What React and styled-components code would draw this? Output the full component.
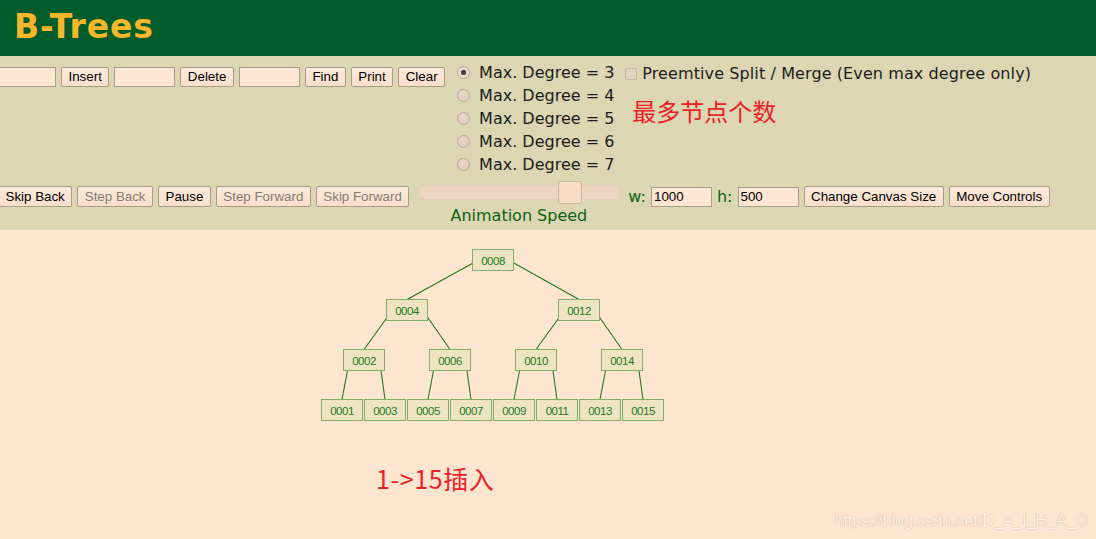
import React from 'react';
import styled, { createGlobalStyle } from 'styled-components';

const GlobalStyle = createGlobalStyle`
  html, body {
    margin: 0;
    padding: 0;
    background: #fee5cf;
    overflow: hidden;
  }
  body {
    font-family: "DejaVu Sans", Verdana, sans-serif;
  }
`;

const Page = styled.div`
  display: flex;
  flex-direction: column;
  width: 1096px;
  height: 539px;
  overflow: hidden;
`;

const Header = styled.header`
  height: 56px;
  box-sizing: border-box;
  padding: 7px 0 0 14px;
  background: #005c2b;
`;

const Title = styled.h1`
  margin: 0;
  font-family: "DejaVu Sans", Verdana, sans-serif;
  font-size: 33px;
  font-weight: bold;
  line-height: normal;
  letter-spacing: 0.9px;
  color: #f9b62a;
`;

const Panel = styled.section`
  height: 174px;
  box-sizing: border-box;
  padding-top: 5px;
  background: #dcd6b3;
  overflow: hidden;
`;

const TopRow = styled.div`
  display: flex;
  align-items: flex-start;
  margin-left: -5px;
`;

const Toolbar = styled.div`
  display: flex;
  gap: 5px;
  margin-top: ${p => p.$offset || 0}px;
`;

const TextField = styled.input`
  width: 61px;
  height: 20px;
  box-sizing: border-box;
  margin: 0;
  padding: 0 2px;
  border: 1px solid #a89c8c;
  background: #fee6d3;
  font-family: "Liberation Sans", Arial, sans-serif;
  font-size: 13.33px;
  color: #000;
  outline: none;
`;

const Button = styled.button`
  height: ${p => p.$tall ? 21 : 20}px;
  box-sizing: border-box;
  margin: 0;
  padding: 0 6.5px;
  border: 1px solid #a99a8b;
  border-radius: 2px;
  background: linear-gradient(#fdeadb, #f8dfcb);
  font-family: "Liberation Sans", Arial, sans-serif;
  font-size: 13.33px;
  line-height: 18px;
  color: ${p => p.disabled ? '#857c74' : '#000'};
  white-space: nowrap;
`;

const RadioColumn = styled.div`
  display: flex;
  flex-direction: column;
  margin-left: 12px;
`;

const RadioRow = styled.label`
  display: flex;
  align-items: center;
  height: 23px;
  gap: 9px;
  font-size: 16px;
  color: #1b1b1b;
`;

const RadioDot = styled.input.attrs({ type: 'radio' })`
  appearance: none;
  width: 13px;
  height: 13px;
  margin: 0;
  border: 1px solid #b7a797;
  border-radius: 50%;
  background: ${p => p.checked
    ? 'radial-gradient(circle, #4a4542 0 2.4px, #e9dcd2 3px)'
    : 'radial-gradient(circle at 40% 35%, #eed9cc, #dcc3b4)'};
  box-sizing: border-box;
`;

const OptionsColumn = styled.div`
  display: flex;
  flex-direction: column;
  margin-left: 11px;
`;

const CheckRow = styled.label`
  display: flex;
  align-items: center;
  gap: 5px;
  height: 25px;
  font-size: 16px;
  letter-spacing: 0.1px;
  color: #1b1b1b;
`;

const CheckBox = styled.input.attrs({ type: 'checkbox' })`
  appearance: none;
  width: 12px;
  height: 12px;
  margin: 0;
  border: 1px solid #c5b9a7;
  border-radius: 2px;
  background: #e1d4c0;
  box-sizing: border-box;
`;

const Note = styled.div`
  margin-top: ${p => p.$top || 0}px;
  margin-left: ${p => p.$left || 0}px;
  font-family: "Noto Sans CJK SC", "Noto Sans", sans-serif;
  font-size: ${p => p.$size || 24}px;
  letter-spacing: ${p => p.$spacing || 0}px;
  line-height: 30px;
  color: #ee2028;
  white-space: nowrap;
`;

const BottomRow = styled.div`
  display: flex;
  align-items: flex-start;
  gap: 5px;
  margin-top: 5px;
`;

const Cell = styled.div`
  display: flex;
  align-items: center;
  gap: 5px;
  margin-top: 5px;
  margin-left: ${p => p.$shift || 0}px;
`;

const SliderColumn = styled.div`
  display: flex;
  flex-direction: column;
  align-items: center;
  margin-left: 4px;
`;

const Slider = styled.input.attrs({ type: 'range' })`
  appearance: none;
  -webkit-appearance: none;
  width: 201px;
  height: 23px;
  margin: 0;
  background: transparent;

  &::-webkit-slider-runnable-track {
    height: 15px;
    border: 1px solid #e6cdb9;
    border-radius: 4px;
    background: #edd5c1;
    box-sizing: border-box;
  }
  &::-webkit-slider-thumb {
    -webkit-appearance: none;
    width: 24px;
    height: 23px;
    margin-top: -5px;
    border: 1px solid #c9b3a2;
    border-radius: 3px;
    background: #f8dcc6;
    box-sizing: border-box;
  }
`;

const SpeedLabel = styled.div`
  margin-top: 2px;
  font-size: 16px;
  line-height: 19px;
  color: #0b6414;
`;

const FieldLabel = styled.span`
  font-size: 16px;
  line-height: 20px;
  color: #0b6414;
`;

const Canvas = styled.main`
  position: relative;
  flex: 1;
  display: flex;
  flex-direction: column;
  align-items: flex-start;
  background: #fee5cf;
`;

const TreeFigure = styled.svg`
  display: block;
  margin: 10px 0 0 315px;
  overflow: visible;
`;

const Watermark = styled.div`
  position: absolute;
  right: 8px;
  bottom: 9px;
  font-family: "Liberation Sans", Arial, sans-serif;
  font-size: 16px;
  color: #fff3ea;
  text-shadow: 0 0 1px rgba(140, 105, 80, 0.6);
`;

const ORIGIN = { x: 315, y: 240 };
const W = 41;
const H = 21;

const nodes = {
  n8: { key: '0008', x: 472.5, y: 249.5, kids: ['n4', 'n12'] },
  n4: { key: '0004', x: 386.5, y: 299.5, kids: ['n2', 'n6'] },
  n12: { key: '0012', x: 558.5, y: 299.5, kids: ['n10', 'n14'] },
  n2: { key: '0002', x: 343.5, y: 349.5, kids: ['n1', 'n3'] },
  n6: { key: '0006', x: 429.5, y: 349.5, kids: ['n5', 'n7'] },
  n10: { key: '0010', x: 515.5, y: 349.5, kids: ['n9', 'n11'] },
  n14: { key: '0014', x: 601.5, y: 349.5, kids: ['n13', 'n15'] },
  n1: { key: '0001', x: 321.5, y: 399.5 },
  n3: { key: '0003', x: 364.5, y: 399.5 },
  n5: { key: '0005', x: 407.5, y: 399.5 },
  n7: { key: '0007', x: 450.5, y: 399.5 },
  n9: { key: '0009', x: 493.5, y: 399.5 },
  n11: { key: '0011', x: 536.5, y: 399.5 },
  n13: { key: '0013', x: 579.5, y: 399.5 },
  n15: { key: '0015', x: 622.5, y: 399.5 },
};

const edges = Object.values(nodes).flatMap(p =>
  (p.kids || []).map((id, i) => {
    const c = nodes[id];
    return {
      id: p.key + c.key,
      x1: (i === 0 ? p.x + 6 : p.x + W - 5) - ORIGIN.x,
      y1: p.y + H / 2 - ORIGIN.y,
      x2: c.x + W / 2 - ORIGIN.x,
      y2: c.y - ORIGIN.y,
    };
  })
);

const BTree = () => (
  <TreeFigure width="360" height="190" viewBox="0 0 360 190">
    {edges.map(e => (
      <line key={e.id} x1={e.x1} y1={e.y1} x2={e.x2} y2={e.y2} stroke="#1f7a1f" strokeWidth="1.1" />
    ))}
    {Object.values(nodes).map(n => (
      <g key={n.key}>
        <rect x={n.x - ORIGIN.x} y={n.y - ORIGIN.y} width={W} height={H} fill="#eee4c2" stroke="#7fae6c" strokeWidth="1" />
        <text
          x={n.x + W / 2 - ORIGIN.x}
          y={n.y + H / 2 - ORIGIN.y + 0.5}
          textAnchor="middle"
          dominantBaseline="central"
          fontFamily="Liberation Sans, Arial, sans-serif"
          fontSize="11.5"
          letterSpacing="-0.5"
          fill="#237a23"
        >
          {n.key}
        </text>
      </g>
    ))}
  </TreeFigure>
);

const degrees = [3, 4, 5, 6, 7];

export default function App() {
  return (
    <Page>
      <GlobalStyle />
      <Header>
        <Title>B-Trees</Title>
      </Header>
      <Panel>
        <TopRow>
          <Toolbar $offset={6}>
            <TextField />
            <Button>Insert</Button>
            <TextField />
            <Button>Delete</Button>
            <TextField />
            <Button>Find</Button>
            <Button>Print</Button>
            <Button>Clear</Button>
          </Toolbar>
          <RadioColumn>
            {degrees.map(d => (
              <RadioRow key={d}>
                <RadioDot name="degree" checked={d === 3} readOnly />
                Max. Degree = {d}
              </RadioRow>
            ))}
          </RadioColumn>
          <OptionsColumn>
            <CheckRow>
              <CheckBox disabled />
              Preemtive Split / Merge (Even max degree only)
            </CheckRow>
            <Note $top={10} $left={7}>最多节点个数</Note>
          </OptionsColumn>
        </TopRow>
        <BottomRow>
          <Cell $shift={-2}>
            <Button $tall>Skip Back</Button>
            <Button $tall disabled>Step Back</Button>
            <Button $tall>Pause</Button>
            <Button $tall disabled>Step Forward</Button>
            <Button $tall disabled>Skip Forward</Button>
          </Cell>
          <SliderColumn>
            <Slider min="0" max="100" defaultValue="79" />
            <SpeedLabel>Animation Speed</SpeedLabel>
          </SliderColumn>
          <Cell $shift={4}>
            <FieldLabel>w:</FieldLabel>
            <TextField defaultValue="1000" />
            <FieldLabel>h:</FieldLabel>
            <TextField defaultValue="500" />
            <Button $tall>Change Canvas Size</Button>
            <Button $tall>Move Controls</Button>
          </Cell>
        </BottomRow>
      </Panel>
      <Canvas>
        <BTree />
        <Note $top={33} $left={376} $size={25} $spacing={0.6}>1-&gt;15插入</Note>
        <Watermark>https://blog.csdn.net/D_A_I_H_A_O</Watermark>
      </Canvas>
    </Page>
  );
}
